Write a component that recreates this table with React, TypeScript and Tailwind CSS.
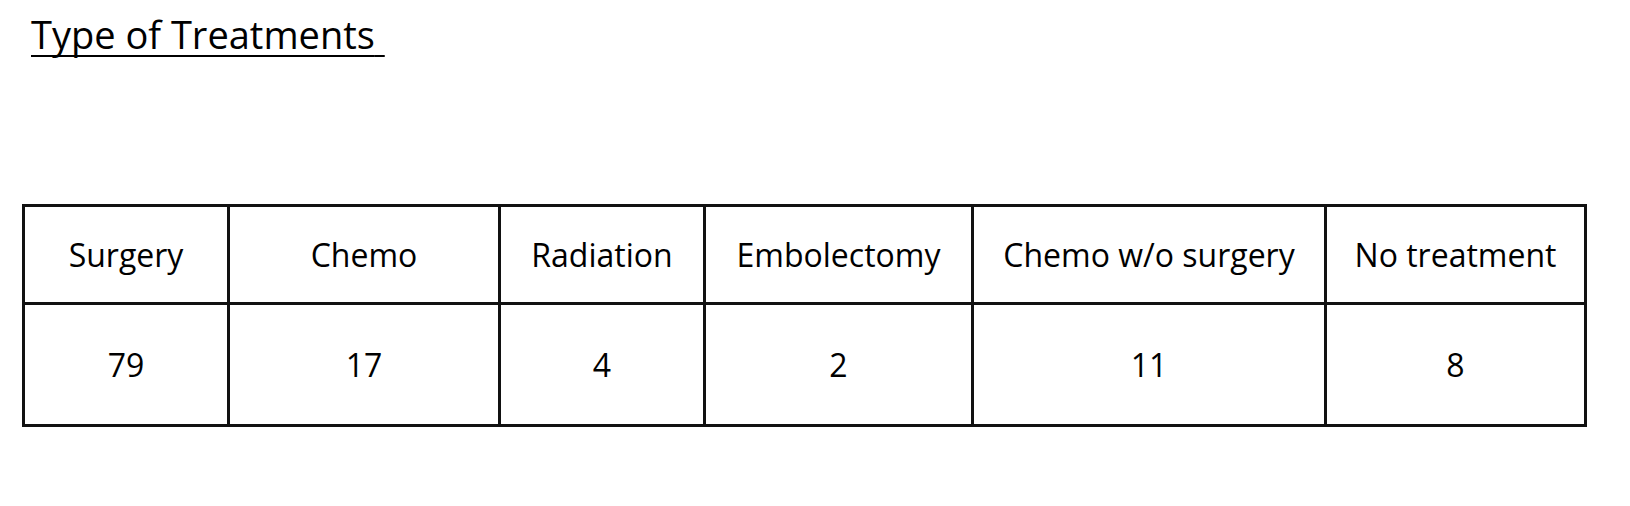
const headers = [
  "Surgery",
  "Chemo",
  "Radiation",
  "Embolectomy",
  "Chemo w/o surgery",
  "No treatment",
]

const counts = ["79", "17", "4", "2", "11", "8"]

export default function App() {
  return (
    <div className="h-[506px] w-[1630px] bg-white font-['Open_Sans',sans-serif] text-black">
      <div className="pl-[31px] pt-[15px]">
        <h1 className="text-[38px] leading-[38px] font-normal underline decoration-[2px] underline-offset-[6px] [text-decoration-skip-ink:none]">
          Type of Treatments{"\u00a0"}
        </h1>
      </div>

      <div className="ml-[22px] mt-[151px] grid w-max grid-cols-[205px_271px_205px_268px_353px_260px] border-l-[3px] border-t-[3px] border-[#111]">
        {headers.map((h) => (
          <div
            key={h}
            className="flex h-[98px] items-center justify-center border-b-[3px] border-r-[3px] border-[#111] text-[32px]"
          >
            {h}
          </div>
        ))}
        {counts.map((c, i) => (
          <div
            key={i}
            className="flex h-[122px] items-center justify-center border-b-[3px] border-r-[3px] border-[#111] text-[32px]"
          >
            {c}
          </div>
        ))}
      </div>
    </div>
  )
}
